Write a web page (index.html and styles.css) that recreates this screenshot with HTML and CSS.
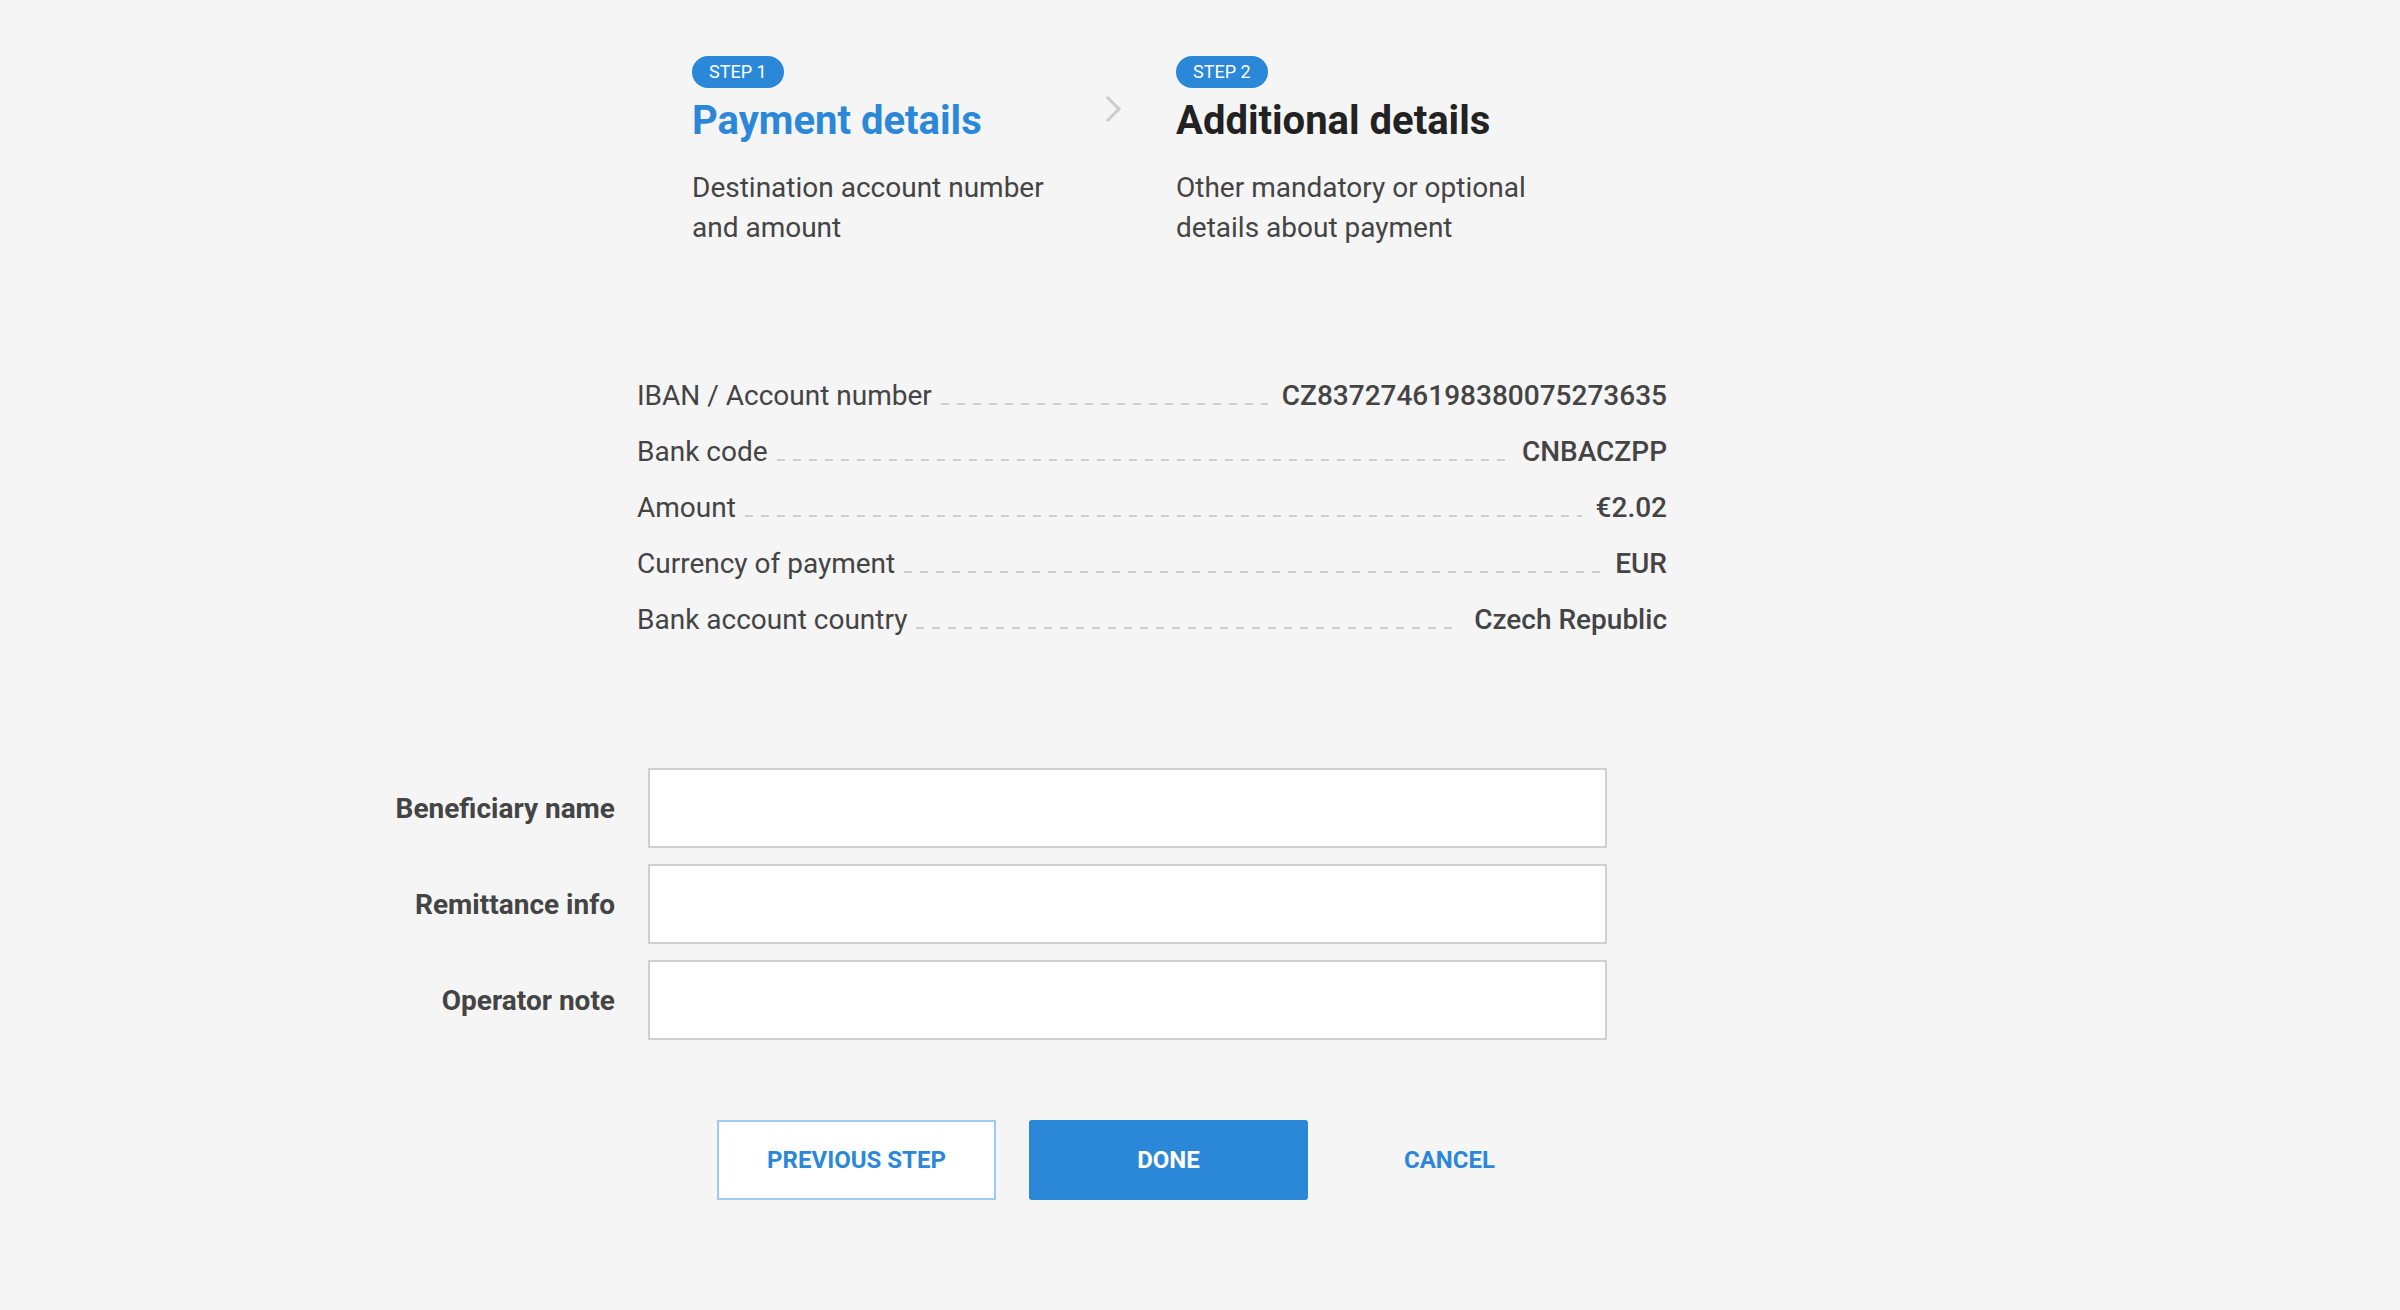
FILE: index.html
```html
<!DOCTYPE html>
<html lang="en">
<head>
<meta charset="utf-8">
<title>Payment</title>
<link rel="stylesheet" href="styles.css">
</head>
<body>
<main class="page">
  <section class="steps">
    <div class="step step-active">
      <span class="badge">STEP 1</span>
      <h2 class="step-title">Payment details</h2>
      <p class="step-desc">Destination account number and amount</p>
    </div>
    <div class="step-arrow">
      <svg width="18" height="28" viewBox="0 0 18 28"><polyline points="3,2 15,14 3,26" fill="none" stroke="#cccccc" stroke-width="3"/></svg>
    </div>
    <div class="step">
      <span class="badge">STEP 2</span>
      <h2 class="step-title">Additional details</h2>
      <p class="step-desc">Other mandatory or optional details about payment</p>
    </div>
  </section>

  <section class="summary">
    <div class="summary-row"><span class="summary-label">IBAN / Account number</span><span class="dots"></span><span class="summary-value">CZ8372746198380075273635</span></div>
    <div class="summary-row"><span class="summary-label">Bank code</span><span class="dots"></span><span class="summary-value">CNBACZPP</span></div>
    <div class="summary-row"><span class="summary-label">Amount</span><span class="dots"></span><span class="summary-value">€2.02</span></div>
    <div class="summary-row"><span class="summary-label">Currency of payment</span><span class="dots"></span><span class="summary-value">EUR</span></div>
    <div class="summary-row"><span class="summary-label">Bank account country</span><span class="dots"></span><span class="summary-value">Czech Republic</span></div>
  </section>

  <form class="form">
    <label class="form-label" for="f1">Beneficiary name</label>
    <input class="form-input" id="f1" type="text">
    <label class="form-label" for="f2">Remittance info</label>
    <input class="form-input" id="f2" type="text">
    <label class="form-label" for="f3">Operator note</label>
    <input class="form-input" id="f3" type="text">
  </form>

  <div class="actions">
    <button class="btn btn-outline" type="button">Previous step</button>
    <button class="btn btn-primary" type="button">Done</button>
    <button class="btn btn-text" type="button">Cancel</button>
  </div>
</main>
</body>
</html>
```

FILE: styles.css
```css
html, body {
  margin: 0;
  padding: 0;
  background: #f5f5f5;
}
body {
  font-family: Roboto, "Liberation Sans", sans-serif;
  color: #444444;
  width: 2400px;
  height: 1310px;
  overflow: hidden;
}
.page {
  padding-top: 56px;
}

/* steps */
.steps {
  display: flex;
  align-items: flex-start;
  margin-left: 692px;
}
.step {
  width: 370px;
  display: flex;
  flex-direction: column;
  align-items: flex-start;
}
.badge {
  display: inline-block;
  height: 32px;
  line-height: 32px;
  padding: 0 17px;
  border-radius: 16px;
  background: #2b88d8;
  color: #ffffff;
  font-size: 18px;
  font-weight: 400;
}
.step-title {
  margin: 9px 0 0;
  font-size: 40px;
  line-height: 48px;
  font-weight: 700;
  color: #222222;
}
.step-active .step-title {
  color: #2b88d8;
}
.step-desc {
  margin: 23px 0 0;
  font-size: 28px;
  line-height: 40px;
  color: #444444;
}
.step-arrow {
  margin: 39px 54px 0 42px;
  width: 18px;
  height: 28px;
}
.step-arrow svg {
  display: block;
}

/* summary */
.summary {
  margin: 120px 0 0 637px;
  width: 1030px;
}
.summary-row {
  display: flex;
  align-items: baseline;
  height: 56px;
  line-height: 56px;
  font-size: 28px;
}
.summary-label {
  color: #444444;
}
.summary-value {
  color: #444444;
  font-weight: 500;
}
.dots {
  flex: 1;
  height: 2px;
  margin: 0 14px 2px 9px;
  background: repeating-linear-gradient(to right, #cfcfcf 0 8px, transparent 8px 16px);
}

/* form */
.form {
  margin: 120px 0 0 365px;
  display: grid;
  grid-template-columns: 250px 959px;
  column-gap: 33px;
  row-gap: 16px;
}
.form-label {
  align-self: center;
  text-align: right;
  font-size: 28px;
  font-weight: 700;
  color: #444444;
}
.form-input {
  box-sizing: border-box;
  height: 80px;
  margin: 0;
  border: 2px solid #d0d0d0;
  background: #ffffff;
  font: inherit;
  font-size: 26px;
  padding: 0 16px;
  outline: none;
}

/* actions */
.actions {
  margin: 80px 0 0 717px;
  display: flex;
  gap: 33px;
}
.btn {
  box-sizing: border-box;
  width: 279px;
  height: 80px;
  margin: 0;
  font-family: Roboto, "Liberation Sans", sans-serif;
  font-size: 24px;
  font-weight: 700;
  text-transform: uppercase;
  cursor: pointer;
}
.btn-outline {
  background: #ffffff;
  border: 2px solid #9dcbf3;
  color: #2b88d8;
}
.btn-primary {
  background: #2b88d8;
  border: none;
  border-radius: 3px;
  color: #ffffff;
}
.btn-text {
  width: auto;
  padding: 0 63px;
  background: transparent;
  border: none;
  color: #2b88d8;
}
```
